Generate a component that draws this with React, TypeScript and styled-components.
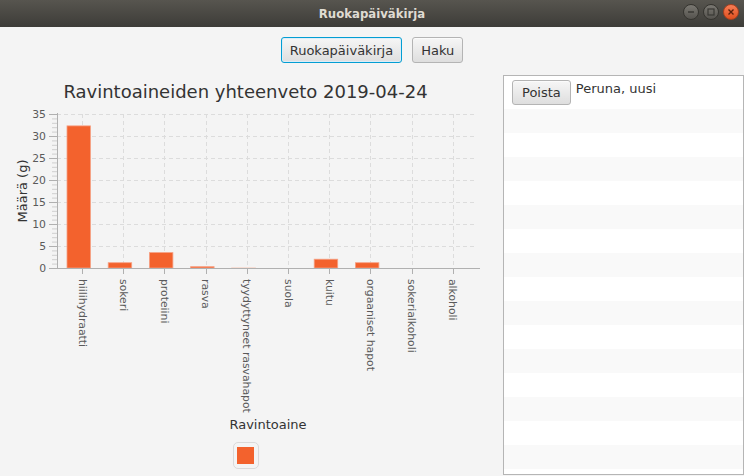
import styled, { createGlobalStyle, css } from "styled-components";

const GlobalStyle = createGlobalStyle`
  html, body {
    margin: 0;
    padding: 0;
    background: #f4f4f4;
    overflow: hidden;
  }
  body {
    font-family: "DejaVu Sans", "Liberation Sans", sans-serif;
    font-size: 13px;
    color: #333333;
  }
`;

const Window = styled.div`
  width: 744px;
  height: 476px;
  display: flex;
  flex-direction: column;
  overflow: hidden;
`;

const TitleBar = styled.div`
  height: 27px;
  flex: none;
  display: flex;
  align-items: center;
  justify-content: center;
  position: relative;
  background: linear-gradient(to bottom, #57554f, #3d3c38);
`;

const TitleText = styled.span`
  font-family: "DejaVu Sans Condensed", "Liberation Sans Narrow", "DejaVu Sans", sans-serif;
  font-stretch: condensed;
  font-weight: bold;
  font-size: 13px;
  color: #dfdbd2;
`;

const WinButtons = styled.div`
  position: absolute;
  right: 5px;
  top: 4px;
  display: flex;
  gap: 4px;
`;

const WinButton = styled.span<{ $close?: boolean }>`
  width: 16px;
  height: 16px;
  border-radius: 50%;
  display: flex;
  align-items: center;
  justify-content: center;
  box-sizing: border-box;
  border: 1px solid #35342f;
  background: linear-gradient(to bottom, #7a7872, #55534e);
  ${(p) =>
    p.$close &&
    css`
      border-color: #a8401f;
      background: linear-gradient(to bottom, #f77d55, #e0501f);
    `}
`;

const Content = styled.div`
  flex: 1;
  display: flex;
  flex-direction: column;
  min-height: 0;
`;

const Nav = styled.div`
  display: flex;
  justify-content: center;
  gap: 10px;
  padding-top: 10px;
`;

const Button = styled.button<{ $focused?: boolean }>`
  font-family: "DejaVu Sans", "Liberation Sans", sans-serif;
  font-size: 13px;
  color: #333333;
  height: 26px;
  padding: 0 8px;
  border-radius: 3px;
  border: 1px solid #b4b4b4;
  background: linear-gradient(to bottom, #f6f6f6, #dedede);
  box-shadow: inset 0 1px 0 #fbfbfb;
  cursor: pointer;
  ${(p) =>
    p.$focused &&
    css`
      border-color: #039ed3;
      box-shadow: inset 0 0 0 1px #dcecf7;
    `}
`;

const Main = styled.div`
  flex: 1;
  display: flex;
  margin-top: 12px;
  min-height: 0;
`;

const ChartPane = styled.div`
  width: 491px;
  padding-right: 12px;
  display: flex;
  flex-direction: column;
  align-items: center;
`;

const ChartTitle = styled.div`
  margin-top: 6px;
  font-size: 18px;
  line-height: 22px;
  color: #333333;
`;

const Plot = styled.svg`
  display: block;
  align-self: flex-start;
  font-family: "DejaVu Sans", "Liberation Sans", sans-serif;
`;

const AxisName = styled.div`
  font-size: 13px;
  line-height: 16px;
  margin-top: 2px;
  padding-left: 45px;
`;

const Legend = styled.div`
  margin-top: 9px;
  width: 26px;
  height: 27px;
  box-sizing: border-box;
  border: 1px solid #dadada;
  border-radius: 5px;
  display: flex;
  align-items: center;
  justify-content: center;
`;

const Swatch = styled.span`
  width: 17px;
  height: 17px;
  background: #f3622d;
`;

const ListView = styled.div`
  width: 245px;
  height: 400px;
  box-sizing: border-box;
  border: 1px solid #b5b5b5;
  background: #ffffff;
  overflow: hidden;
`;

const Row = styled.div<{ $odd?: boolean; $first?: boolean }>`
  height: ${(p) => (p.$first ? "33px" : "24px")};
  background: ${(p) => (p.$odd ? "#f9f9f9" : "#ffffff")};
  display: flex;
  align-items: flex-start;
  gap: 5px;
  padding: 4px 0 0 8px;
  box-sizing: border-box;
`;

const SmallButton = styled(Button)`
  height: 25px;
  padding: 0 9px;
`;

const RowLabel = styled.span`
  margin-top: 1px;
  line-height: 16px;
`;

const data = [
  { name: "hiilihydraatti", value: 32.3 },
  { name: "sokeri", value: 1.2 },
  { name: "proteiini", value: 3.5 },
  { name: "rasva", value: 0.3 },
  { name: "tyydyttyneet rasvahapot", value: 0.1 },
  { name: "suola", value: 0 },
  { name: "kuitu", value: 2.0 },
  { name: "orgaaniset hapot", value: 1.2 },
  { name: "sokerialkoholi", value: 0 },
  { name: "alkoholi", value: 0 },
];

// svg top sits at page y 103
const TOP = 103;
const y = (v: number) => 268 - v * 4.4 - TOP;
const cx = (i: number) => 82 + i * 41.2;

function BarChart() {
  const majors = [0, 5, 10, 15, 20, 25, 30, 35];
  const minors: number[] = [];
  for (let v = 0; v < 35; v++) if (v % 5 !== 0) minors.push(v);

  return (
    <Plot width={491} height={312} viewBox="0 0 491 312">
      {majors.slice(1).map((v) => (
        <line key={"h" + v} x1={57} x2={477} y1={y(v) + 0.5} y2={y(v) + 0.5} stroke="#dcdcdc" strokeDasharray="4 3" />
      ))}
      {data.map((d, i) => (
        <line key={"v" + i} x1={Math.round(cx(i)) + 0.5} x2={Math.round(cx(i)) + 0.5} y1={y(35)} y2={y(0)} stroke="#dcdcdc" strokeDasharray="4 3" />
      ))}
      {data.map((d, i) =>
        d.value > 0 ? (
          <rect
            key={"b" + i}
            x={cx(i) - 15}
            y={y(d.value)}
            width={23.5}
            height={d.value * 4.4}
            fill="#f3622d"
            stroke={d.value < 0.2 ? "#f8c9b7" : "#f6a184"}
            strokeWidth={0.8}
            opacity={d.value < 0.2 ? 0.5 : 1}
          />
        ) : null
      )}
      <line x1={57.5} x2={57.5} y1={y(35) - 1} y2={y(0)} stroke="#b0b0b0" />
      <line x1={57} x2={480} y1={y(0) + 0.5} y2={y(0) + 0.5} stroke="#b0b0b0" />
      {majors.map((v) => (
        <g key={"m" + v}>
          <line x1={49} x2={57} y1={y(v) + 0.5} y2={y(v) + 0.5} stroke="#b0b0b0" />
          <text x={46} y={y(v) + 0.5} textAnchor="end" dominantBaseline="central" fontSize={10.8} fill="#5a5a5a">
            {v}
          </text>
        </g>
      ))}
      {minors.map((v) => (
        <line key={"n" + v} x1={52} x2={57} y1={y(v) + 0.5} y2={y(v) + 0.5} stroke="#cfcfcf" />
      ))}
      {data.map((d, i) => (
        <g key={"t" + i}>
          <line x1={Math.round(cx(i)) + 0.5} x2={Math.round(cx(i)) + 0.5} y1={y(0)} y2={y(0) + 6} stroke="#b0b0b0" />
          <text
            transform={`translate(${cx(i)},${279 - TOP}) rotate(90)`}
            dominantBaseline="central"
            fontSize={10.8}
            fill="#5a5a5a"
          >
            {d.name}
          </text>
        </g>
      ))}
      <text
        transform={`translate(22,${191 - TOP}) rotate(-90)`}
        textAnchor="middle"
        dominantBaseline="central"
        fontSize={13}
        fill="#333333"
      >
        Määrä (g)
      </text>
    </Plot>
  );
}

export default function App() {
  const rows = Array.from({ length: 16 }, (_, i) => i + 1);
  return (
    <>
      <GlobalStyle />
      <Window>
        <TitleBar>
          <TitleText>Ruokapäiväkirja</TitleText>
          <WinButtons>
            <WinButton>
              <svg width="8" height="8" viewBox="0 0 8 8">
                <line x1="1" y1="4" x2="7" y2="4" stroke="#3a3935" strokeWidth="1.5" />
              </svg>
            </WinButton>
            <WinButton>
              <svg width="8" height="8" viewBox="0 0 8 8">
                <rect x="1" y="1" width="6" height="6" fill="none" stroke="#3a3935" strokeWidth="1.2" />
              </svg>
            </WinButton>
            <WinButton $close>
              <svg width="8" height="8" viewBox="0 0 8 8">
                <path d="M1.5 1.5 L6.5 6.5 M6.5 1.5 L1.5 6.5" stroke="#5a200c" strokeWidth="1.4" />
              </svg>
            </WinButton>
          </WinButtons>
        </TitleBar>
        <Content>
          <Nav>
            <Button $focused>Ruokapäiväkirja</Button>
            <Button>Haku</Button>
          </Nav>
          <Main>
            <ChartPane>
              <ChartTitle>Ravintoaineiden yhteenveto 2019-04-24</ChartTitle>
              <BarChart />
              <AxisName>Ravintoaine</AxisName>
              <Legend>
                <Swatch />
              </Legend>
            </ChartPane>
            <ListView>
              <Row $first>
                <SmallButton>Poista</SmallButton>
                <RowLabel>Peruna, uusi</RowLabel>
              </Row>
              {rows.map((i) => (
                <Row key={i} $odd={i % 2 === 1} />
              ))}
            </ListView>
          </Main>
        </Content>
      </Window>
    </>
  );
}
